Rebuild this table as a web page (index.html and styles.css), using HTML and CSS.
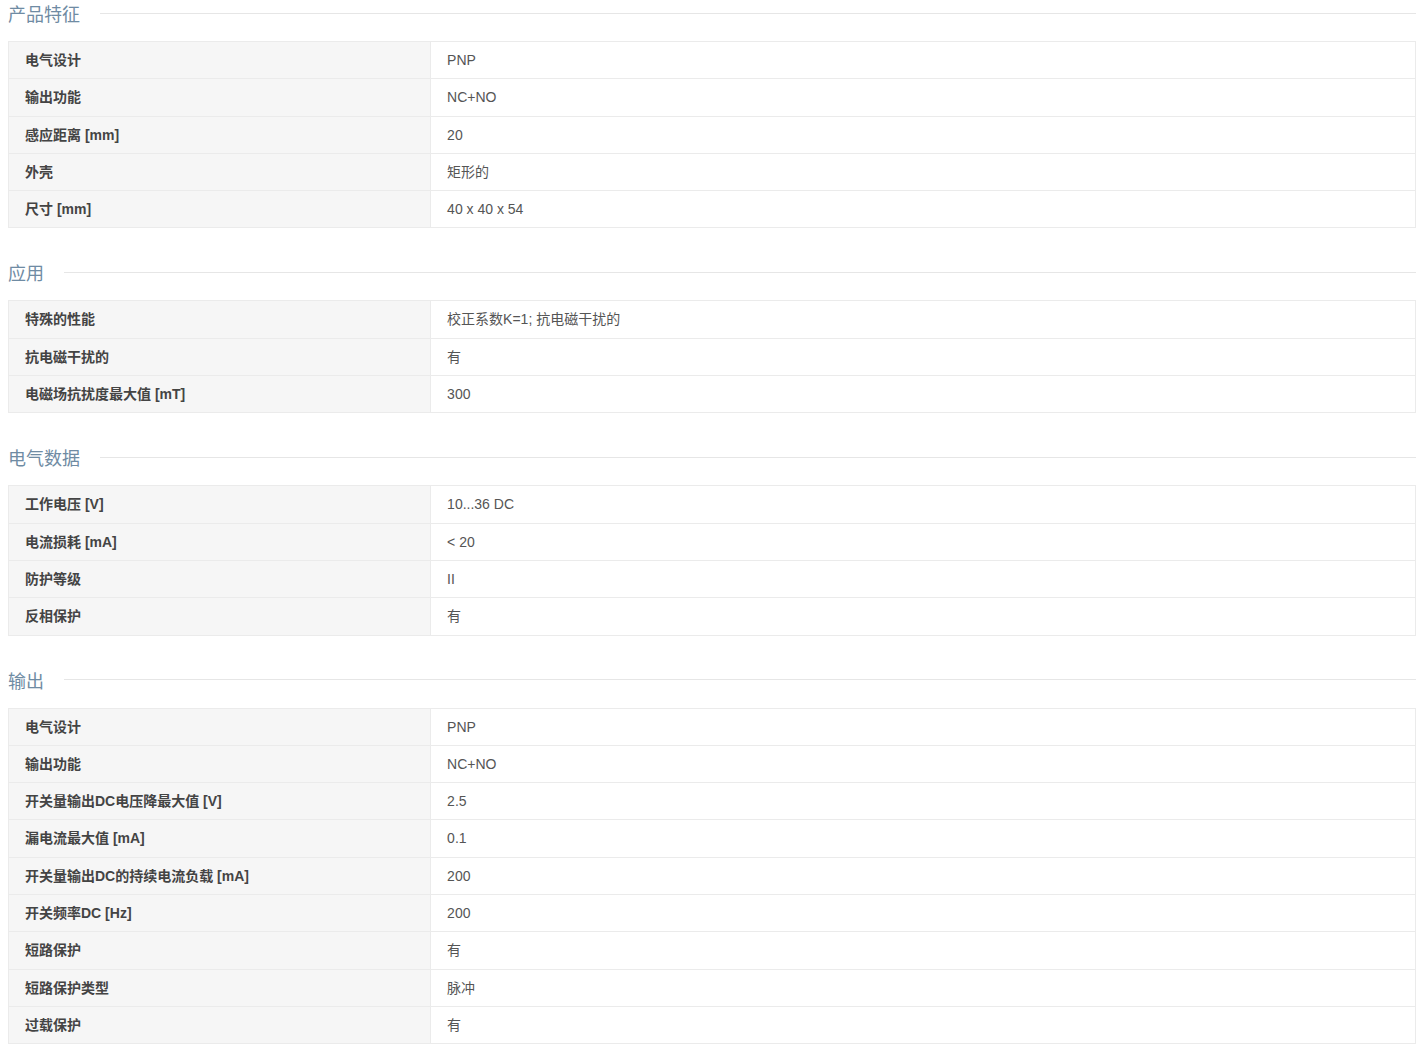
FILE: index.html
```html
<!DOCTYPE html>
<html lang="zh-CN">
<head>
    <meta charset="UTF-8">
    <meta name="viewport" content="width=device-width, initial-scale=1.0">
    <title>产品参数</title>
    <link rel="stylesheet" href="styles.css">
</head>
<body>

    <div class="specs">
        <div class="section">
            <h3 class="section-title"><span>产品特征</span></h3>
            <table>
                <colgroup><col class="col-label"><col></colgroup>
                <tr><th>电气设计</th><td>PNP</td></tr>
                <tr><th>输出功能</th><td>NC+NO</td></tr>
                <tr><th>感应距离 [mm]</th><td>20</td></tr>
                <tr><th>外壳</th><td>矩形的</td></tr>
                <tr><th>尺寸 [mm]</th><td>40 x 40 x 54</td></tr>
            </table>
        </div>

        <div class="section">
            <h3 class="section-title"><span>应用</span></h3>
            <table>
                <colgroup><col class="col-label"><col></colgroup>
                <tr><th>特殊的性能</th><td>校正系数K=1; 抗电磁干扰的</td></tr>
                <tr><th>抗电磁干扰的</th><td>有</td></tr>
                <tr><th>电磁场抗扰度最大值 [mT]</th><td>300</td></tr>
            </table>
        </div>

        <div class="section">
            <h3 class="section-title"><span>电气数据</span></h3>
            <table>
                <colgroup><col class="col-label"><col></colgroup>
                <tr><th>工作电压 [V]</th><td>10...36 DC</td></tr>
                <tr><th>电流损耗 [mA]</th><td>&lt; 20</td></tr>
                <tr><th>防护等级</th><td>II</td></tr>
                <tr><th>反相保护</th><td>有</td></tr>
            </table>
        </div>

        <div class="section">
            <h3 class="section-title"><span>输出</span></h3>
            <table>
                <colgroup><col class="col-label"><col></colgroup>
                <tr><th>电气设计</th><td>PNP</td></tr>
                <tr><th>输出功能</th><td>NC+NO</td></tr>
                <tr><th>开关量输出DC电压降最大值 [V]</th><td>2.5</td></tr>
                <tr><th>漏电流最大值 [mA]</th><td>0.1</td></tr>
                <tr><th>开关量输出DC的持续电流负载 [mA]</th><td>200</td></tr>
                <tr><th>开关频率DC [Hz]</th><td>200</td></tr>
                <tr><th>短路保护</th><td>有</td></tr>
                <tr><th>短路保护类型</th><td>脉冲</td></tr>
                <tr><th>过载保护</th><td>有</td></tr>
            </table>
        </div>
    </div>

</body>
</html>
```

FILE: styles.css
```css
body {
    font-family: "Liberation Sans", Arial, "Noto Sans CJK SC", sans-serif;
    background-color: #ffffff;
    margin: 0;
    padding: 0 12px 0 8px;
    color: #555;
}

.section {
    margin-bottom: 31px;
}

.section-title {
    display: flex;
    align-items: center;
    gap: 20px;
    height: 26px;
    margin: 0 0 15px 0;
    font-size: 18px;
    font-weight: normal;
    color: #6f8ba3;
    white-space: nowrap;
}

.section-title::after {
    content: "";
    flex: 1;
    height: 1px;
    background: #e6e6e6;
}

table {
    width: 100%;
    border-collapse: collapse;
    table-layout: fixed;
    font-size: 14px;
}

.col-label {
    width: 30%;
}

th, td {
    border: 1px solid #ebebeb;
    padding: 9px 16px;
    line-height: 18.3px;
    text-align: left;
}

th {
    background-color: #f6f6f6;
    color: #444;
    font-weight: bold;
}

td {
    background: #ffffff;
    color: #555;
}
```
